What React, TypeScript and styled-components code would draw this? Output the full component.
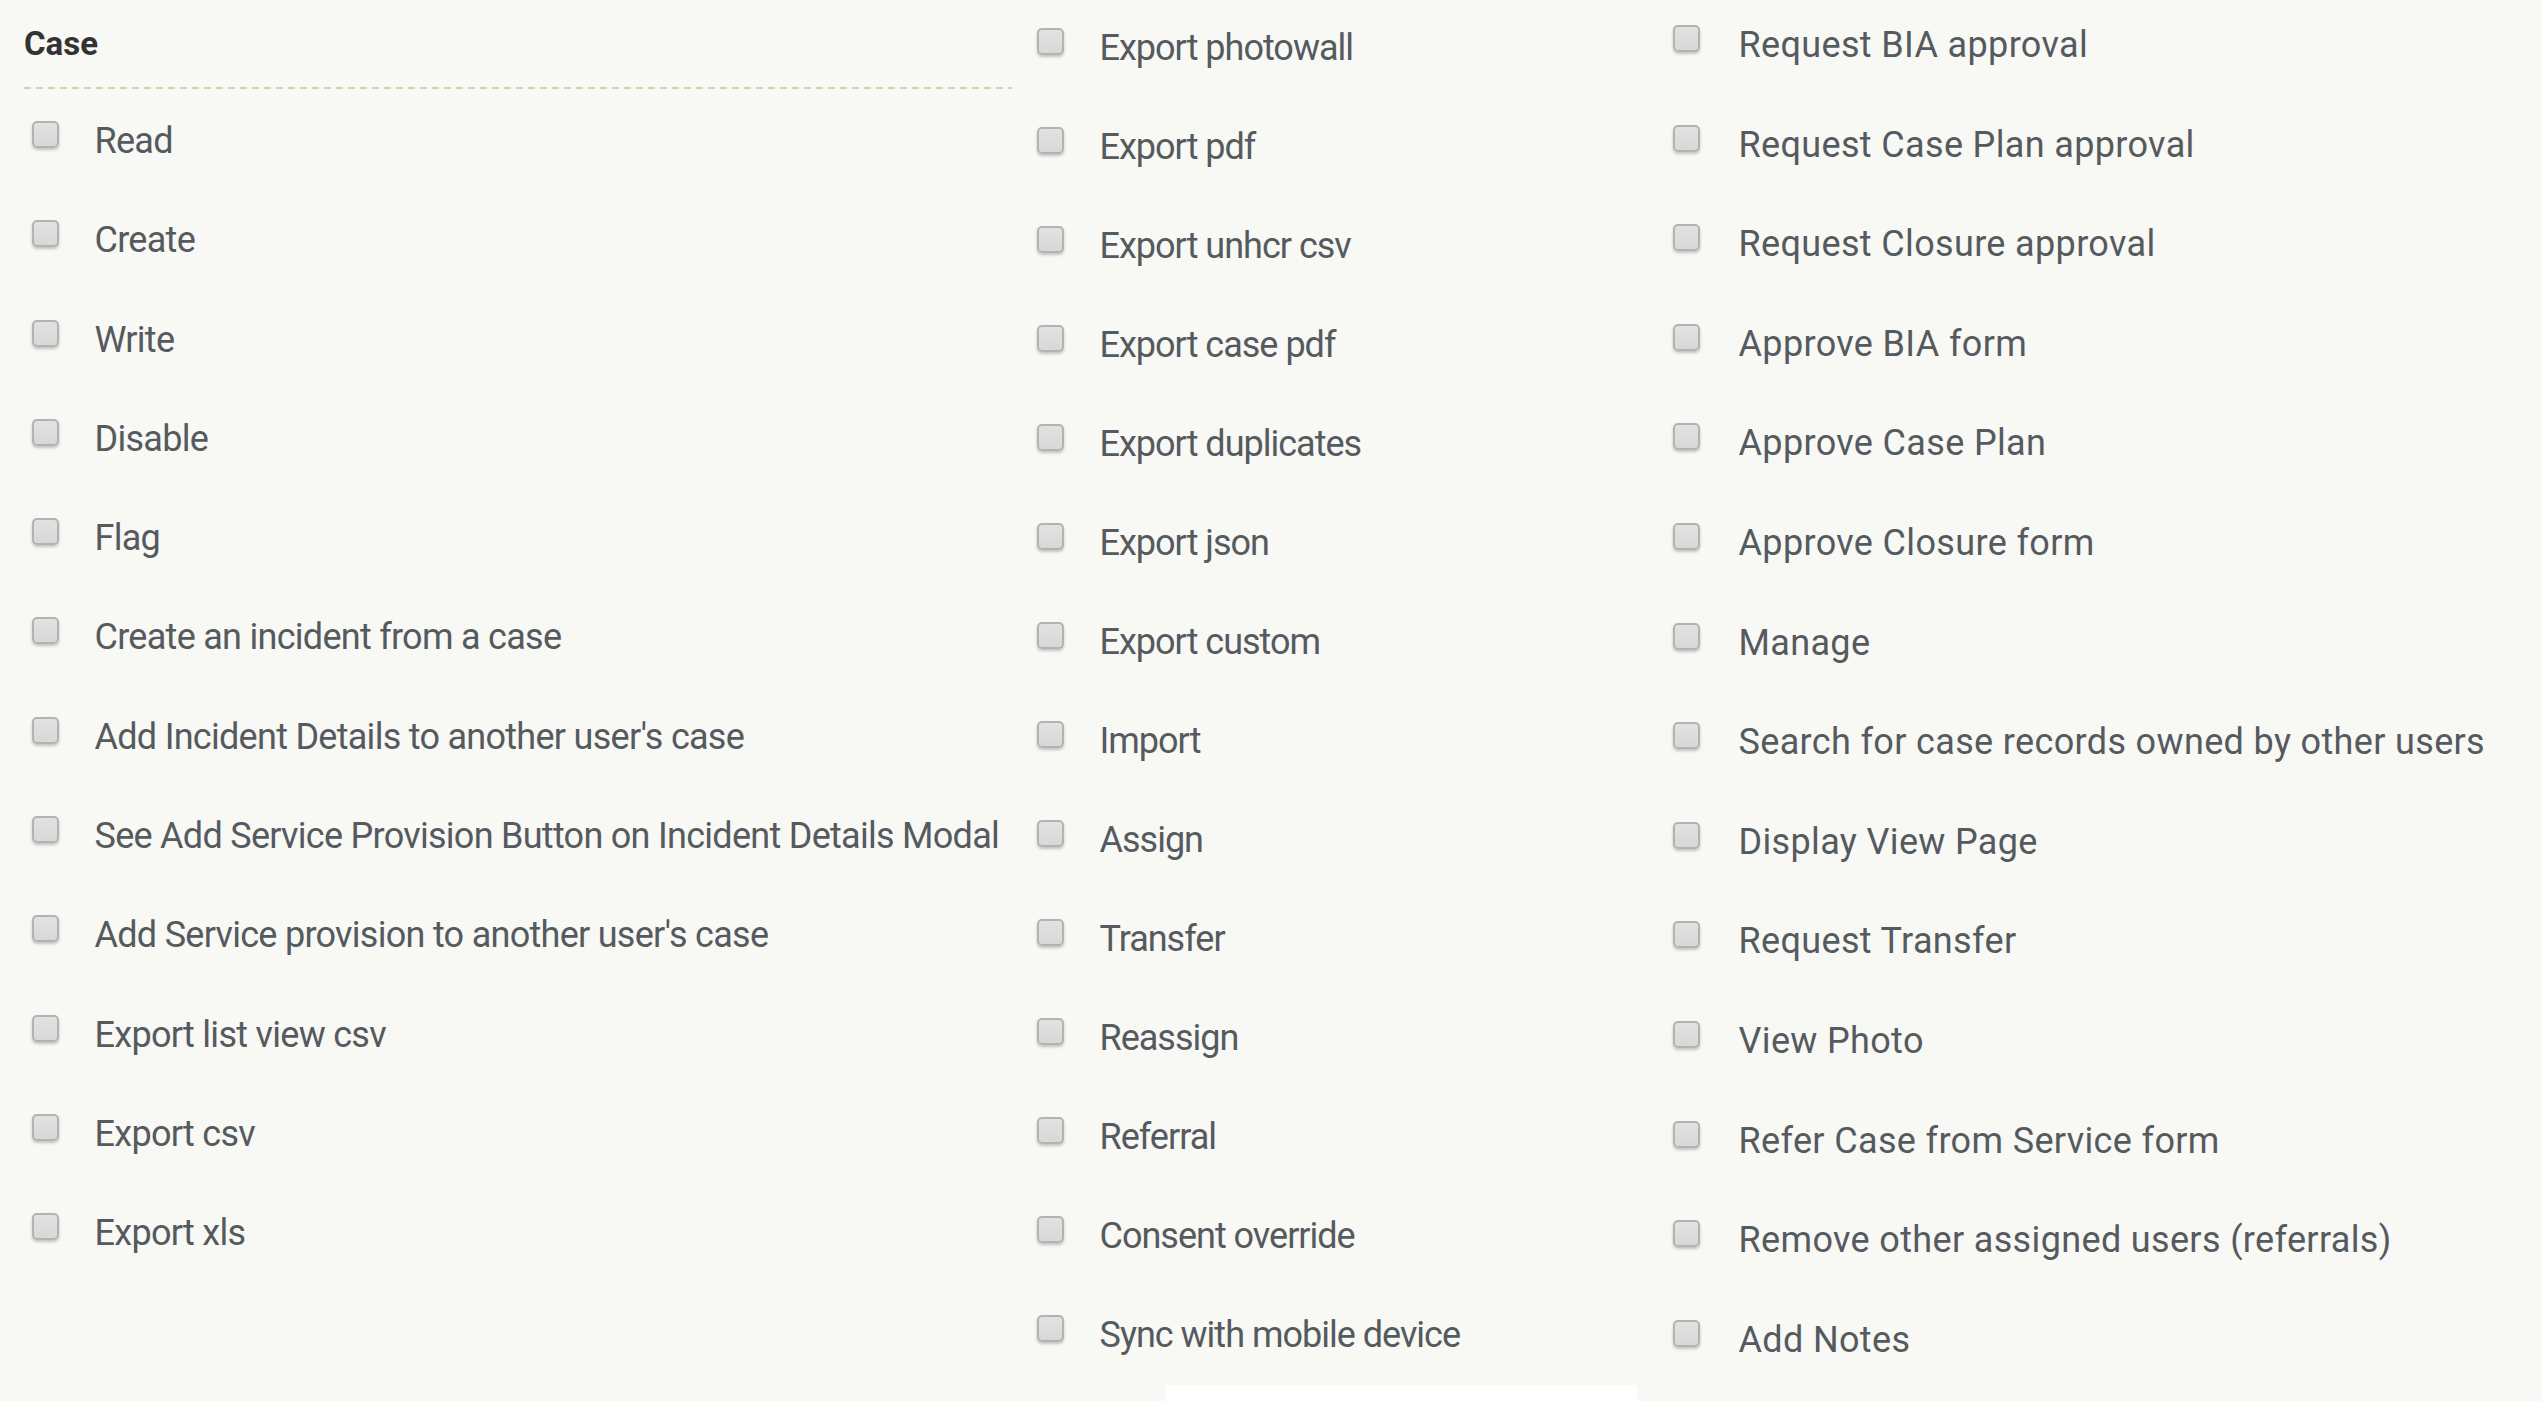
import React from "react";
import styled, { createGlobalStyle } from "styled-components";

const GlobalStyle = createGlobalStyle`
  html, body {
    margin: 0;
    padding: 0;
    background: #f8f8f4;
    font-family: Roboto, "Liberation Sans", Arial, sans-serif;
  }
  * { box-sizing: border-box; }
`;

const Page = styled.div`
  display: grid;
  grid-template-columns: 1012px 638px 1fr;
  width: 2542px;
  background: #f8f8f4;
`;

const Column = styled.div<{ $top: number; $left: number }>`
  display: flex;
  flex-direction: column;
  padding-top: ${(p) => p.$top}px;
  padding-left: ${(p) => p.$left}px;
`;

const SectionTitle = styled.div`
  font-size: 33px;
  line-height: 40px;
  font-weight: 700;
  color: #333333;
  height: 40px;
`;

const Divider = styled.div`
  margin-top: 23px;
  height: 2px;
  width: 988px;
  background: repeating-linear-gradient(
    to right,
    #c9d8b1 0px,
    #c9d8b1 7px,
    transparent 7px,
    transparent 12px
  );
`;

const RowList = styled.div<{ $gap: number; $offset: number; $inset: number }>`
  display: flex;
  flex-direction: column;
  row-gap: ${(p) => p.$gap}px;
  margin-top: ${(p) => p.$offset}px;
  padding-left: ${(p) => p.$inset}px;
`;

const Row = styled.label<{ $labelGap: number }>`
  display: flex;
  align-items: flex-start;
  gap: ${(p) => p.$labelGap}px;
  height: 40px;
  cursor: pointer;
`;

const Box = styled.span`
  flex: 0 0 auto;
  width: 27px;
  height: 27px;
  border-radius: 5px;
  border: 2px solid #b3b3b3;
  background: linear-gradient(#e2e2e2, #d8d8d8);
  box-shadow: 0 2px 3px rgba(0, 0, 0, 0.22);
`;

const LabelText = styled.span<{ $tracking: number }>`
  font-size: 36px;
  line-height: 40px;
  letter-spacing: ${(p) => p.$tracking}px;
  color: #555a5f;
  white-space: nowrap;
`;

const FooterBlock = styled.div`
  margin-top: 30px;
  margin-left: 128px;
  width: 472px;
  height: 18px;
  background: #ffffff;
`;

const col1 = [
  "Read",
  "Create",
  "Write",
  "Disable",
  "Flag",
  "Create an incident from a case",
  "Add Incident Details to another user's case",
  "See Add Service Provision Button on Incident Details Modal",
  "Add Service provision to another user's case",
  "Export list view csv",
  "Export csv",
  "Export xls",
];

const col2 = [
  "Export photowall",
  "Export pdf",
  "Export unhcr csv",
  "Export case pdf",
  "Export duplicates",
  "Export json",
  "Export custom",
  "Import",
  "Assign",
  "Transfer",
  "Reassign",
  "Referral",
  "Consent override",
  "Sync with mobile device",
];

const col3 = [
  "Request BIA approval",
  "Request Case Plan approval",
  "Request Closure approval",
  "Approve BIA form",
  "Approve Case Plan",
  "Approve Closure form",
  "Manage",
  "Search for case records owned by other users",
  "Display View Page",
  "Request Transfer",
  "View Photo",
  "Refer Case from Service form",
  "Remove other assigned users (referrals)",
  "Add Notes",
];

const Permission: React.FC<{ label: string; gap: number; tracking: number }> = ({
  label,
  gap,
  tracking,
}) => (
  <Row $labelGap={gap}>
    <Box />
    <LabelText $tracking={tracking}>{label}</LabelText>
  </Row>
);

export default function App() {
  return (
    <>
      <GlobalStyle />
      <Page>
        <Column $top={24} $left={24}>
          <SectionTitle>Case</SectionTitle>
          <Divider />
          <RowList $gap={59.3} $offset={32} $inset={8}>
            {col1.map((l) => (
              <Permission key={l} label={l} gap={35.5} tracking={-0.72} />
            ))}
          </RowList>
        </Column>
        <Column $top={28} $left={25}>
          <RowList $gap={59} $offset={0} $inset={0}>
            {col2.map((l) => (
              <Permission key={l} label={l} gap={35.5} tracking={-1} />
            ))}
          </RowList>
          <FooterBlock />
        </Column>
        <Column $top={25} $left={23}>
          <RowList $gap={59.6} $offset={0} $inset={0}>
            {col3.map((l) => (
              <Permission key={l} label={l} gap={38.5} tracking={0.35} />
            ))}
          </RowList>
        </Column>
      </Page>
    </>
  );
}
